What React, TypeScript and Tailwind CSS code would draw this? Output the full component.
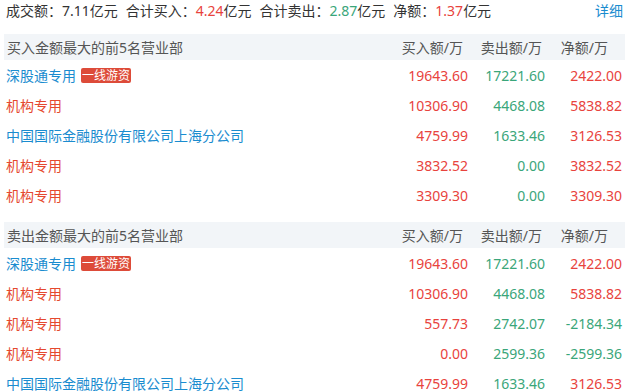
import React from "react";

interface IRow {
  name: string;
  tag?: string;
  buy: string;
  sell: string;
  net: string;
}

const buyRows: IRow[] = [
  { name: "深股通专用", tag: "一线游资", buy: "19643.60", sell: "17221.60", net: "2422.00" },
  { name: "机构专用", buy: "10306.90", sell: "4468.08", net: "5838.82" },
  { name: "中国国际金融股份有限公司上海分公司", buy: "4759.99", sell: "1633.46", net: "3126.53" },
  { name: "机构专用", buy: "3832.52", sell: "0.00", net: "3832.52" },
  { name: "机构专用", buy: "3309.30", sell: "0.00", net: "3309.30" },
];

const sellRows: IRow[] = [
  { name: "深股通专用", tag: "一线游资", buy: "19643.60", sell: "17221.60", net: "2422.00" },
  { name: "机构专用", buy: "10306.90", sell: "4468.08", net: "5838.82" },
  { name: "机构专用", buy: "557.73", sell: "2742.07", net: "-2184.34" },
  { name: "机构专用", buy: "0.00", sell: "2599.36", net: "-2599.36" },
  { name: "中国国际金融股份有限公司上海分公司", buy: "4759.99", sell: "1633.46", net: "3126.53" },
];

const RED = "text-[#e8433d]";
const GREEN = "text-[#3aa67a]";

const Row = ({ row }: { row: IRow }) => {
  const nameColor = row.name === "机构专用" ? "text-[#e5492f]" : "text-[#1a8ccf]";
  const netColor = row.net.startsWith("-") ? GREEN : RED;
  return (
    <div className="flex items-center h-[30px] pl-[6px] pr-[3px]">
      <div className={`flex-1 flex items-center ${nameColor}`}>
        <span>{row.name}</span>
        {row.tag && (
          <span className="ml-[5px] h-[15px] px-[1px] flex items-center bg-[#dd4b39] text-white text-[12px] leading-[15px] rounded-[2px]">
            {row.tag}
          </span>
        )}
      </div>
      <div className={`w-[77px] text-right ${RED}`}>{row.buy}</div>
      <div className={`w-[77px] text-right ${GREEN}`}>{row.sell}</div>
      <div className={`w-[77px] text-right ${netColor}`}>{row.net}</div>
    </div>
  );
};

const Section = ({ title, rows, className }: { title: string; rows: IRow[]; className: string }) => (
  <div className={className}>
    <div className="ml-[4px] h-[26px] bg-[#f2f5f8] flex items-center pl-[3px] pr-[3px] text-[#555]">
      <div className="flex-1">{title}</div>
      <div className="w-[77px] text-right pr-[5px]">买入额/万</div>
      <div className="w-[77px] text-right pr-[3px]">卖出额/万</div>
      <div className="w-[77px] text-right pr-[14px]">净额/万</div>
    </div>
    {rows.map((r, i) => (
      <Row row={r} key={i} />
    ))}
  </div>
);

export default function App() {
  return (
    <div
      className="w-[625px] h-[391px] overflow-hidden bg-white text-[14px] text-[#333]"
      style={{ fontFamily: '"Noto Sans", "Noto Sans CJK SC", sans-serif' }}
    >
      <div className="h-[20px] flex items-center justify-between pl-[6px] pr-[2px]">
        <div className="flex items-center gap-[8px]">
          <span>
            成交额：<span>7.11</span>亿元
          </span>
          <span>
            合计买入：<span className={RED}>4.24</span>亿元
          </span>
          <span>
            合计卖出：<span className={GREEN}>2.87</span>亿元
          </span>
          <span>
            净额：<span className={RED}>1.37</span>亿元
          </span>
        </div>
        <span className="text-[#1a8ccf]">详细</span>
      </div>
      <Section title="买入金额最大的前5名营业部" rows={buyRows} className="mt-[14px]" />
      <Section title="卖出金额最大的前5名营业部" rows={sellRows} className="mt-[12px]" />
    </div>
  );
}
